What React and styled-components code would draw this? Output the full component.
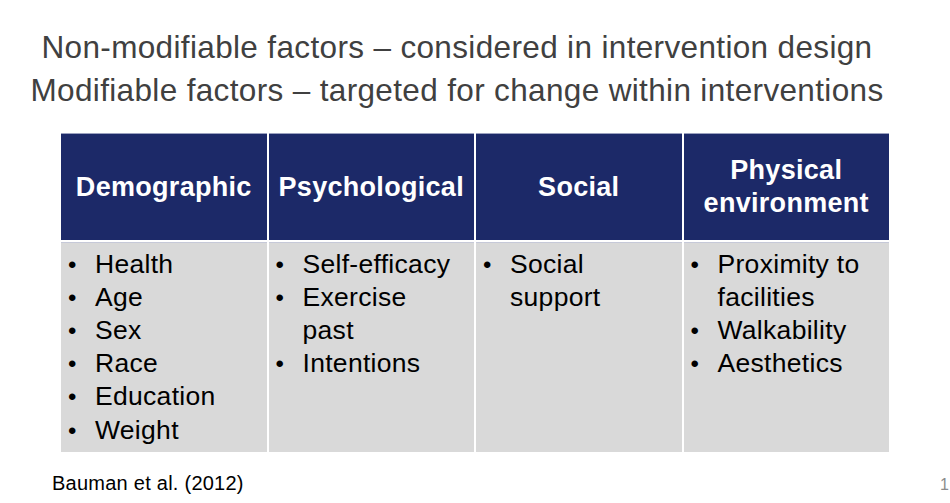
import React from "react";
import styled, { createGlobalStyle } from "styled-components";

const Global = createGlobalStyle`
  html, body { margin: 0; padding: 0; background: #ffffff; overflow: hidden; }
  body { font-family: "Liberation Sans", Arial, Helvetica, sans-serif; }
`;

const Slide = styled.div`
  width: 950px;
  height: 503px;
  display: flex;
  flex-direction: column;
  background: #fff;
  overflow: hidden;
`;

const Title = styled.div`
  margin-top: 26px;
  padding-right: 36px;
  text-align: center;
  color: #404040;
  font-size: 31.5px;
  line-height: 43px;
  letter-spacing: 0.35px;
  white-space: nowrap;
`;

const Table = styled.div`
  margin: 21px 0 0 61px;
  width: 828px;
  display: grid;
  grid-template-columns: repeat(4, 1fr);
  grid-template-rows: 107px 210px;
  column-gap: 2px;
  row-gap: 2px;
  background: #fff;
`;

const HeadCell = styled.div`
  background: #1c2968;
  border-top: 1px solid #9ba1bf;
  display: flex;
  align-items: center;
  justify-content: center;
  text-align: center;
  padding: 0 6px;
  color: #fff;
  font-weight: 700;
  font-size: 27px;
  line-height: 33px;
  letter-spacing: 0.3px;
`;

const BodyCell = styled.div`
  background: #d9d9d9;
  border-top: 1px solid #c6c9d8;
  padding: 4.5px 14px 0 7px;
`;

const Item = styled.div`
  display: grid;
  grid-template-columns: 27px 1fr;
  font-size: 26.5px;
  line-height: 33.2px;
  letter-spacing: 0.3px;
  color: #000;
`;

const Bullet = styled.span`
  letter-spacing: 0;
  font-size: 24px;
`;

const Footer = styled.div`
  margin-top: 21px;
  display: flex;
  align-items: baseline;
  padding-left: 52px;
`;

const Source = styled.span`
  font-size: 20px;
  line-height: 20px;
  letter-spacing: 0.25px;
  color: #000;
`;

const PageNum = styled.span`
  margin-left: auto;
  margin-right: 1px;
  font-size: 16px;
  color: #8c8c8c;
`;

const columns = [
  { head: "Demographic", items: ["Health", "Age", "Sex", "Race", "Education", "Weight"] },
  { head: "Psychological", items: ["Self-efficacy", "Exercise past", "Intentions"] },
  { head: "Social", items: ["Social support"] },
  { head: "Physical environment", items: ["Proximity to facilities", "Walkability", "Aesthetics"] },
];

export default function App() {
  return (
    <Slide>
      <Global />
      <Title>
        Non-modifiable factors – considered in intervention design
        <br />
        Modifiable factors – targeted for change within interventions
      </Title>
      <Table>
        {columns.map((c) => (
          <HeadCell key={c.head}>{c.head}</HeadCell>
        ))}
        {columns.map((c) => (
          <BodyCell key={c.head + "-b"}>
            {c.items.map((it) => (
              <Item key={it}>
                <Bullet>•</Bullet>
                <span>{it}</span>
              </Item>
            ))}
          </BodyCell>
        ))}
      </Table>
      <Footer>
        <Source>Bauman et al. (2012)</Source>
        <PageNum>1</PageNum>
      </Footer>
    </Slide>
  );
}
